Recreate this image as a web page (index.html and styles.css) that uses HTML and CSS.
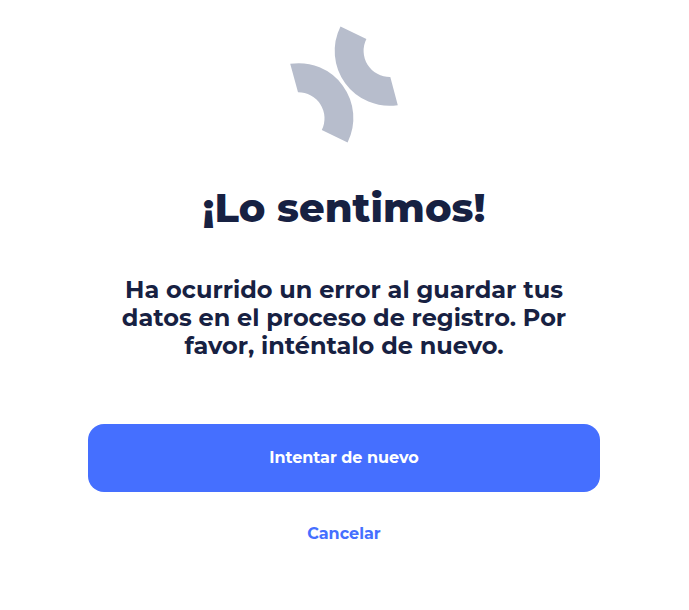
FILE: index.html
```html
<!DOCTYPE html>
<html lang="es">
<head>
  <meta charset="utf-8">
  <meta name="viewport" content="width=device-width, initial-scale=1">
  <title>¡Lo sentimos!</title>
  <link rel="stylesheet" href="styles.css">
</head>
<body>
  <main class="error">
    <svg class="error-icon" width="108" height="117" viewBox="0 0 108 117" aria-hidden="true">
      <path d="M0.2 37.8A54.8 54.8 0 0 1 57.6 116.4L31.8 104A26.2 26.2 0 0 0 8 66.2Z"/>
      <path d="M50.5 0.5L76.4 13A26.2 26.2 0 0 0 100.3 51L107.8 79.2A54.8 54.8 0 0 1 50.5 0.5Z"/>
    </svg>
    <h1 class="error-title">¡Lo sentimos!</h1>
    <p class="error-text">Ha ocurrido un error al guardar tus datos en el proceso de registro. Por favor, inténtalo de nuevo.</p>
    <div class="actions">
      <button class="button button-primary" type="button">Intentar de nuevo</button>
      <button class="button button-link" type="button">Cancelar</button>
    </div>
  </main>
</body>
</html>
```
FILE: styles.css
```css
* {
  box-sizing: border-box;
}

body {
  margin: 0;
  padding-right: 1px;
  background: #fff;
  color: #172142;
  font-family: Montserrat, Inter, sans-serif;
}

.error {
  display: flex;
  flex-direction: column;
  align-items: center;
  max-width: 544px;
  margin: 0 auto;
  padding: 26px 16px;
  text-align: center;
}

.error-icon {
  fill: #b7bdcc;
}

.error-title {
  margin: 40px 0 43px;
  font-size: 40px;
  font-weight: 800;
  line-height: 50px;
}

.error-text {
  max-width: 464px;
  margin: 0;
  font-size: 24px;
  font-weight: 700;
  line-height: 28px;
}

.actions {
  display: flex;
  flex-direction: column;
  gap: 8px;
  width: 100%;
  margin-top: 64px;
}

.button {
  height: 68px;
  padding: 0 16px 2px;
  border: 0;
  border-radius: 16px;
  font: inherit;
  font-size: 16px;
  font-weight: 700;
  cursor: pointer;
}

.button-primary {
  background: #456fff;
  color: #fff;
}

.button-link {
  background: transparent;
  color: #456fff;
}
```
